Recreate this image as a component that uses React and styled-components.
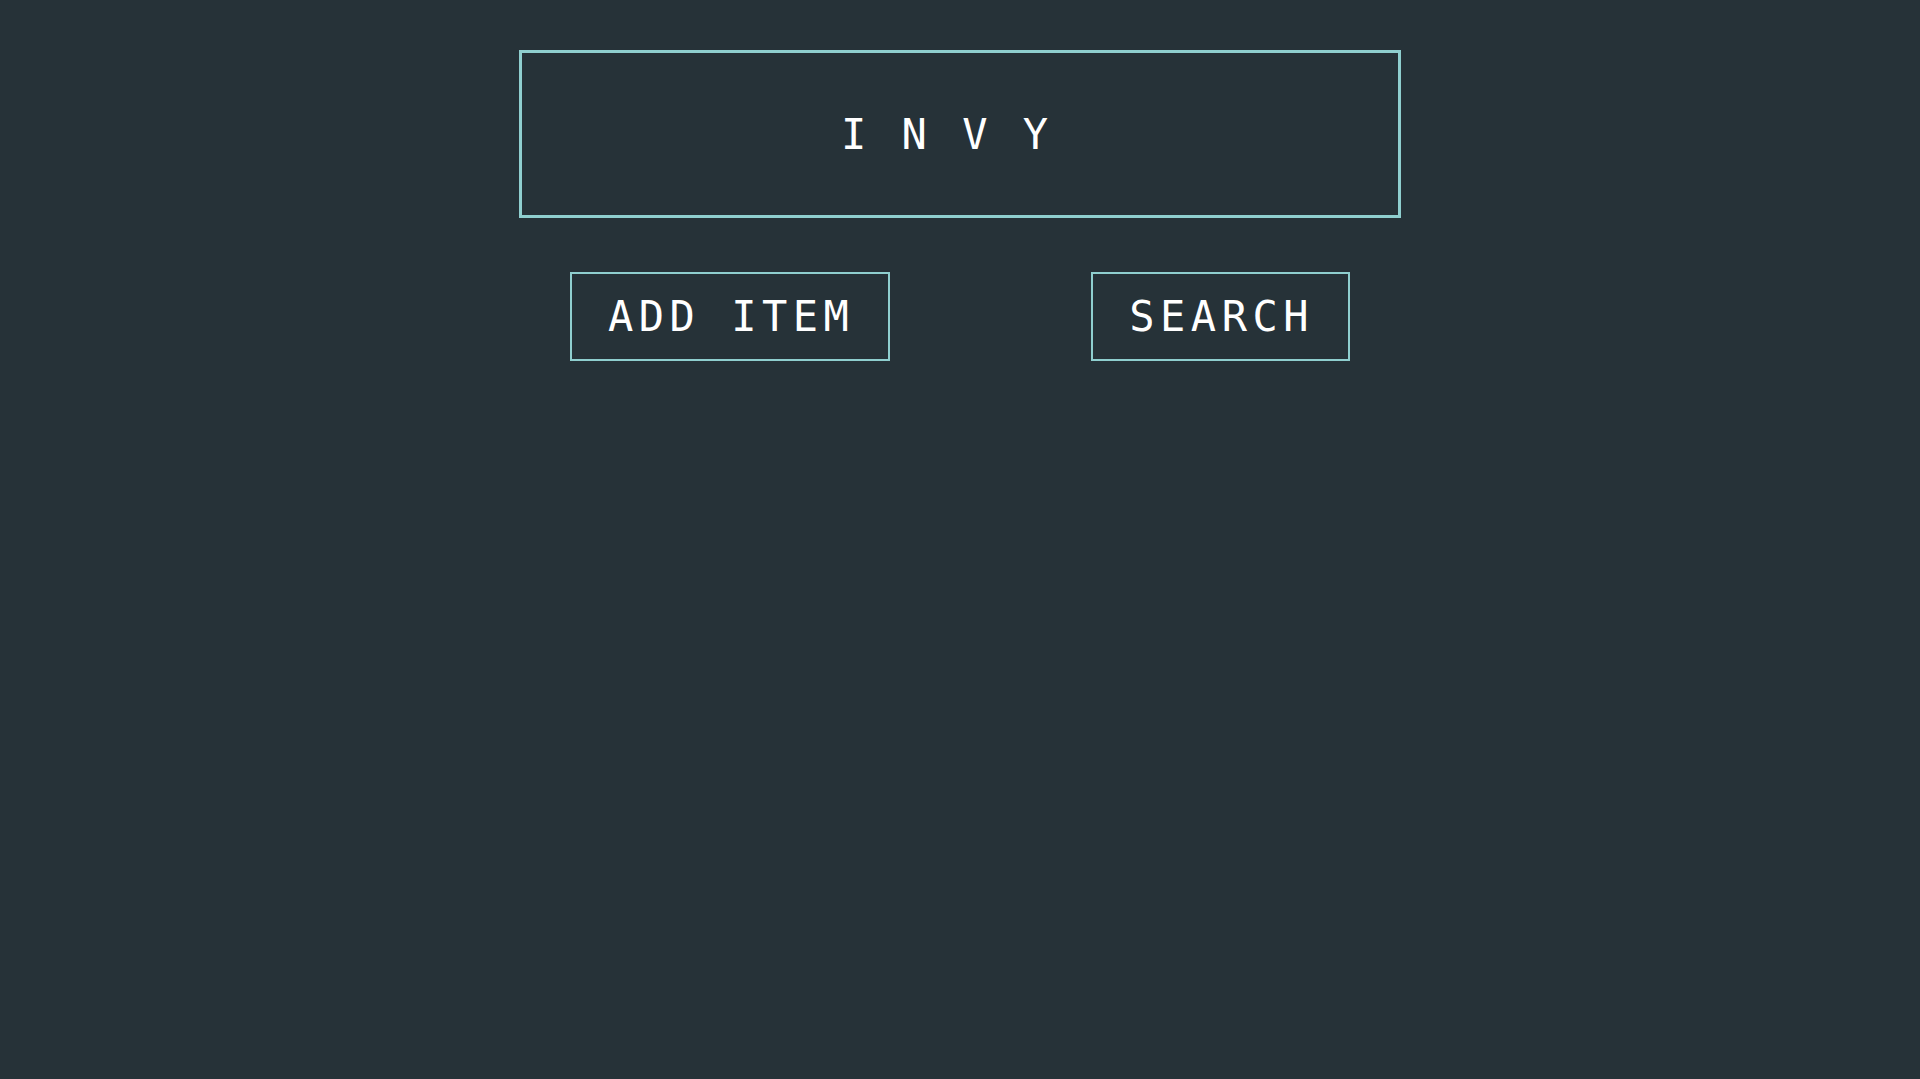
import React from "react";
import styled, { createGlobalStyle } from "styled-components";

const GlobalStyle = createGlobalStyle`
  html, body {
    margin: 0;
    padding: 0;
    background: #263238;
    min-height: 100%;
  }
  body {
    font-family: "DejaVu Sans Mono", monospace;
    color: #ffffff;
  }
`;

const Page = styled.div`
  min-height: 1079px;
  display: flex;
  flex-direction: column;
  align-items: center;
  padding-top: 50px;
  box-sizing: border-box;
`;

const Header = styled.header`
  width: 882px;
  height: 168px;
  box-sizing: border-box;
  border: 3px solid #8fcfcf;
  display: flex;
  align-items: center;
  justify-content: center;
`;

const Title = styled.h1`
  margin: 0;
  padding-right: 26px;
  font-family: "DejaVu Sans Mono", monospace;
  font-weight: normal;
  font-size: 42px;
  letter-spacing: 5px;
  white-space: pre;
  color: #ffffff;
`;

const Actions = styled.nav`
  width: 882px;
  box-sizing: border-box;
  padding: 0 51px;
  margin-top: 54px;
  display: flex;
  justify-content: space-between;
`;

const ActionButton = styled.button`
  height: 89px;
  box-sizing: border-box;
  padding: 0 34px 0 36px;
  background: #263238;
  border: 2px solid #8fcfcf;
  color: #ffffff;
  font-family: "DejaVu Sans Mono", monospace;
  font-size: 42px;
  letter-spacing: 5.5px;
  cursor: pointer;
`;

export default function App() {
  return (
    <>
      <GlobalStyle />
      <Page>
        <Header>
          <Title>I N V Y</Title>
        </Header>
        <Actions>
          <ActionButton>ADD ITEM</ActionButton>
          <ActionButton>SEARCH</ActionButton>
        </Actions>
      </Page>
    </>
  );
}
